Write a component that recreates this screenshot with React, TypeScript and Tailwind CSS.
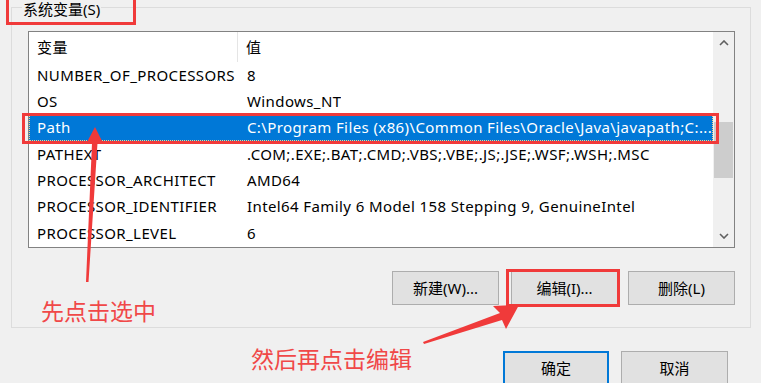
import React from "react";

const rows: [string, string][] = [
  ["NUMBER_OF_PROCESSORS", "8"],
  ["OS", "Windows_NT"],
  ["Path", "C:\\Program Files (x86)\\Common Files\\Oracle\\Java\\javapath;C:..."],
  ["PATHEXT", ".COM;.EXE;.BAT;.CMD;.VBS;.VBE;.JS;.JSE;.WSF;.WSH;.MSC"],
  ["PROCESSOR_ARCHITECT", "AMD64"],
  ["PROCESSOR_IDENTIFIER", "Intel64 Family 6 Model 158 Stepping 9, GenuineIntel"],
  ["PROCESSOR_LEVEL", "6"],
];

const font = { fontFamily: '"Noto Sans", "Noto Sans CJK SC", sans-serif' };

function Btn({ label }: { label: string }) {
  return (
    <div className="w-[107px] h-[34px] flex items-center justify-center bg-[#e1e1e1] text-[15px] text-black border border-[#adadad]">
      {label}
    </div>
  );
}

function Chevron({ up }: { up?: boolean }) {
  return (
    <svg width="10" height="6" viewBox="0 0 10 6">
      <path
        d={up ? "M1 5 L5 1 L9 5" : "M1 1 L5 5 L9 1"}
        fill="none"
        stroke="#606060"
        strokeWidth="1.6"
      />
    </svg>
  );
}

export default function App() {
  return (
    <div
      className="relative w-[761px] h-[383px] overflow-hidden bg-[#f0f0f0] text-black"
      style={font}
    >
      {/* Group box */}
      <div className="relative ml-[11px] mt-[7px] w-[740px] h-[321px] border border-[#dcdcdc] pt-[23px] pl-[16px]">
        <div className="absolute left-[10px] -top-[7px] bg-[#f0f0f0] px-[1px] text-[15px] leading-[17px]">
          系统变量(S)
        </div>

        {/* List */}
        <div className="flex w-[707px] h-[217px] border border-[#828282] bg-white text-[15px] tracking-[0.4px]">
          <div className="flex flex-col w-[684px]">
            <div className="flex h-[30px] items-center">
              <div className="w-[209px] h-full flex items-center pl-[8px] border-r border-[#e5e5e5]">变量</div>
              <div className="pl-[8px]">值</div>
            </div>
            {rows.map(([k, v]) => {
              const sel = k === "Path";
              return (
                <div
                  key={k}
                  className={
                    "flex h-[26.3px] items-center whitespace-nowrap " +
                    (sel ? "bg-[#0078d7] text-white border border-dotted border-[#f5d08a]" : "")
                  }
                >
                  <div className={(sel ? "w-[209px] pl-[7px]" : "w-[210px] pl-[8px]") + " overflow-hidden"}>{k}</div>
                  <div className="pl-[8px] overflow-hidden">{v}</div>
                </div>
              );
            })}
          </div>
          <div className="flex flex-col w-[21px] bg-[#f0f0f0] items-center">
            <div className="h-[22px] flex items-center justify-center">
              <Chevron up />
            </div>
            <div className="h-[68px]" />
            <div className="w-[19px] h-[56px] bg-[#cdcdcd]" />
            <div className="flex-1" />
            <div className="h-[22px] flex items-center justify-center">
              <Chevron />
            </div>
          </div>
        </div>

        {/* Buttons */}
        <div className="flex mt-[23px] justify-end pr-[15px]">
          <Btn label="新建(W)..." />
          <div className="ml-[12px]">
            <Btn label="编辑(I)..." />
          </div>
          <div className="ml-[10px]">
            <Btn label="删除(L)" />
          </div>
        </div>
      </div>

      {/* Dialog buttons */}
      <div className="flex mt-[23px] pl-[503px] gap-[12px]">
        <div className="w-[106px] h-[34px] flex items-center justify-center bg-[#e1e1e1] border-2 border-[#0078d7] text-[15px]">
          确定
        </div>
        <div className="w-[107px] h-[34px] flex items-center justify-center bg-[#e1e1e1] border border-[#adadad] text-[15px]">
          取消
        </div>
      </div>

      {/* Annotations */}
      <div className="absolute left-[6px] -top-[4px] w-[130px] h-[29px] border-[3px] border-[#f03a3a]" />
      <div className="absolute left-[22px] top-[113px] w-[697px] h-[31px] border-[3px] border-[#f03a3a]" />
      <div className="absolute left-[506px] top-[269px] w-[114px] h-[38px] border-[3px] border-[#f03a3a]" />

      <svg className="absolute inset-0 pointer-events-none" width="761" height="383">
        <polygon
          points="86,282 92,143 86,144 95,127 103,143 97.5,143 88.5,282"
          fill="#f03a3a"
        />
        <polygon
          points="423,342 500,313 493,306 519,305 506,329 502,320 424,344"
          fill="#f03a3a"
        />
      </svg>

      <div
        className="absolute left-[41px] top-[296px] text-[23px] leading-[28px] text-[#f04848]"
        style={{ fontFamily: '"Noto Sans CJK SC", sans-serif' }}
      >
        先点击选中
      </div>
      <div
        className="absolute left-[251px] top-[344px] text-[23px] leading-[28px] text-[#f04848]"
        style={{ fontFamily: '"Noto Sans CJK SC", sans-serif' }}
      >
        然后再点击编辑
      </div>
    </div>
  );
}
